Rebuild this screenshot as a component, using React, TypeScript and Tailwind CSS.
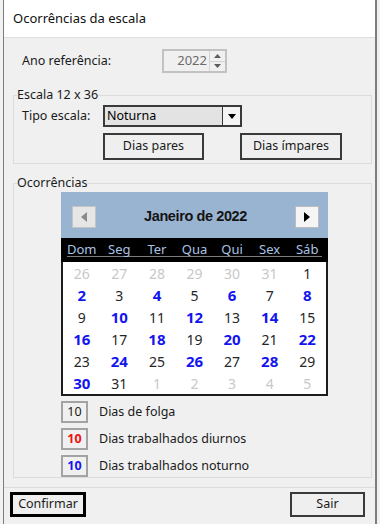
import React from 'react';

// January 2022 grid, starting on Sunday 26 Dec
const days: { n: number; cur: boolean }[] = [
  ...[26, 27, 28, 29, 30, 31].map((n) => ({ n, cur: false })),
  ...Array.from({ length: 31 }, (_, i) => ({ n: i + 1, cur: true })),
  ...[1, 2, 3, 4, 5].map((n) => ({ n, cur: false })),
];

const weekDays = ['Dom', 'Seg', 'Ter', 'Qua', 'Qui', 'Sex', 'Sáb'];

function Calendar() {
  return (
    <div className="w-[267px] ml-[47px]">
      {/* header */}
      <div className="flex h-[46px] items-center justify-between bg-[#99b4d1] pl-[11px] pr-[9px] pt-[4px]">
        <button className="flex h-[22px] w-[24px] items-center justify-center border border-[#c4c4c4] bg-[#e6e6e6]">
          <svg width="6" height="10" viewBox="0 0 6 10">
            <path d="M6 0 L0 5 L6 10 Z" fill="#8a8a8a" />
          </svg>
        </button>
        <div className="font-['Liberation_Sans',sans-serif] text-[14.5px] font-bold tracking-[-0.4px] text-[#141414]">
          Janeiro de 2022
        </div>
        <button className="flex h-[22px] w-[24px] items-center justify-center border border-[#bcbcbc] bg-[#f5f5f5]">
          <svg width="6" height="10" viewBox="0 0 6 10">
            <path d="M0 0 L6 5 L0 10 Z" fill="#000" />
          </svg>
        </button>
      </div>
      {/* week day names */}
      <div className="bg-black">
        <div className="grid h-[18px] grid-cols-7 px-[2px] pt-[4px] text-center text-[13px] leading-[14px] text-[#a9c3e4]">
          {weekDays.map((d) => (
            <div key={d}>{d}</div>
          ))}
        </div>
        <div className="mx-[6px] h-px bg-[#7c7c7c]" />
        <div className="h-[5px]" />
      </div>
      {/* days */}
      <div className="grid grid-cols-7 border-2 border-t-0 border-[#1c1c1c] bg-white text-center">
        {days.map((d, i) => {
          const blue = d.cur && d.n % 2 === 0;
          return (
            <div
              key={i}
              className={`flex h-[22px] items-center justify-center ${
                !d.cur
                  ? 'text-[14px] text-[#c8c8c8]'
                  : blue
                  ? 'text-[15px] font-bold text-[#1414f0]'
                  : 'text-[14px] text-[#262626]'
              }`}
            >
              {d.n}
            </div>
          );
        })}
      </div>
    </div>
  );
}

function LegendRow({ color, bold, label }: { color: string; bold?: boolean; label: string }) {
  return (
    <div className="flex h-[22px] items-center">
      <div
        className={`flex h-[22px] w-[27px] items-center justify-center border-2 border-[#a3a3a3] text-[12.5px] ${color} ${
          bold ? 'font-bold' : ''
        }`}
      >
        10
      </div>
      <span className="ml-[11px] text-[12.5px] text-[#1a1a1a]">{label}</span>
    </div>
  );
}

export default function App() {
  return (
    <div className="flex h-[524px] w-[380px] overflow-hidden bg-[#ececec] font-['Noto_Sans',sans-serif] text-[#1a1a1a]">
      <div className="w-[3px] shrink-0 bg-[#f2f2f2]" />
      <div className="flex w-[374px] shrink-0 flex-col border-l border-r-2 border-[#7d7d7d] bg-[#f0f0f0]">
        {/* title bar */}
        <div className="flex h-[38px] shrink-0 items-center border-b border-[#dedede] bg-white pl-[9px] text-[13px] text-[#111]">
          Ocorrências da escala
        </div>

        {/* Ano referencia */}
        <div className="mt-[11px] flex items-center pl-[18px] text-[12.5px]">
          <span className="w-[140px]">Ano referência:</span>
          <div className="flex h-[24px] w-[65px] items-stretch border-2 border-[#c2c2c2] bg-[#f0f0f0]">
            <div className="flex flex-1 items-center justify-end pr-[2px] text-[13px] text-[#6b6b6b]">2022</div>
            <div className="flex w-[16px] flex-col border-l border-[#d4d4d4]">
              <div className="flex flex-1 items-center justify-center border-b border-[#d4d4d4]">
                <svg width="7" height="4" viewBox="0 0 7 4">
                  <path d="M0 4 L3.5 0 L7 4 Z" fill="#5c5c5c" />
                </svg>
              </div>
              <div className="flex flex-1 items-center justify-center">
                <svg width="7" height="4" viewBox="0 0 7 4">
                  <path d="M0 0 L3.5 4 L7 0 Z" fill="#5c5c5c" />
                </svg>
              </div>
            </div>
          </div>
        </div>

        {/* Escala 12 x 36 */}
        <fieldset className="ml-[9px] mt-[15px] w-[359px] border border-[#dcdcdc] pb-[3px] pt-[3px]">
          <legend className="ml-[3px] text-[12.5px] leading-[14px]">Escala 12 x 36</legend>
          <div className="flex items-center pl-[8px] text-[12.5px]">
            <span className="w-[81px]">Tipo escala:</span>
            <div className="flex h-[22px] w-[139px] border-2 border-[#3a3a3a] bg-[#e3e3e3]">
              <div className="flex flex-1 items-center pl-[2px] text-[12.5px] text-black">Noturna</div>
              <div className="flex w-[18px] items-center justify-center border-l border-[#3a3a3a] bg-[#f4f4f4]">
                <svg width="8" height="5" viewBox="0 0 8 5">
                  <path d="M0 0 L8 0 L4 5 Z" fill="#000" />
                </svg>
              </div>
            </div>
          </div>
          <div className="ml-[89px] mt-[6px] flex gap-[36px] text-[12.5px]">
            <button className="h-[27px] w-[101px] border-2 border-[#3a3a3a] bg-[#efefef]">Dias pares</button>
            <button className="h-[27px] w-[102px] border-2 border-[#3a3a3a] bg-[#efefef]">Dias ímpares</button>
          </div>
        </fieldset>

        {/* Ocorrencias */}
        <fieldset className="ml-[9px] mt-[12px] w-[359px] border border-[#dcdcdc] pt-[2px]">
          <legend className="ml-[3px] text-[12.5px] leading-[14px]">Ocorrências</legend>
          <Calendar />
          <div className="ml-[47px] mt-[5px] flex flex-col gap-[5px]">
            <LegendRow color="text-[#1a1a1a]" label="Dias de folga" />
            <LegendRow color="text-[#f01010]" bold label="Dias trabalhados diurnos" />
            <LegendRow color="text-[#1414f0]" bold label="Dias trabalhados  noturno" />
          </div>
        </fieldset>

        {/* bottom buttons */}
        <div className="mt-[9px] flex justify-between border-t border-[#dcdcdc] pl-[6px] pr-[10px] pt-[4px] text-[12.5px]">
          <button className="h-[25px] w-[76px] border-[3px] border-black bg-[#efefef]">Confirmar</button>
          <button className="h-[25px] w-[75px] border-2 border-[#3a3a3a] bg-[#efefef]">Sair</button>
        </div>
      </div>
      <div className="w-[3px] shrink-0 bg-[#f0f0f0]" />
    </div>
  );
}
